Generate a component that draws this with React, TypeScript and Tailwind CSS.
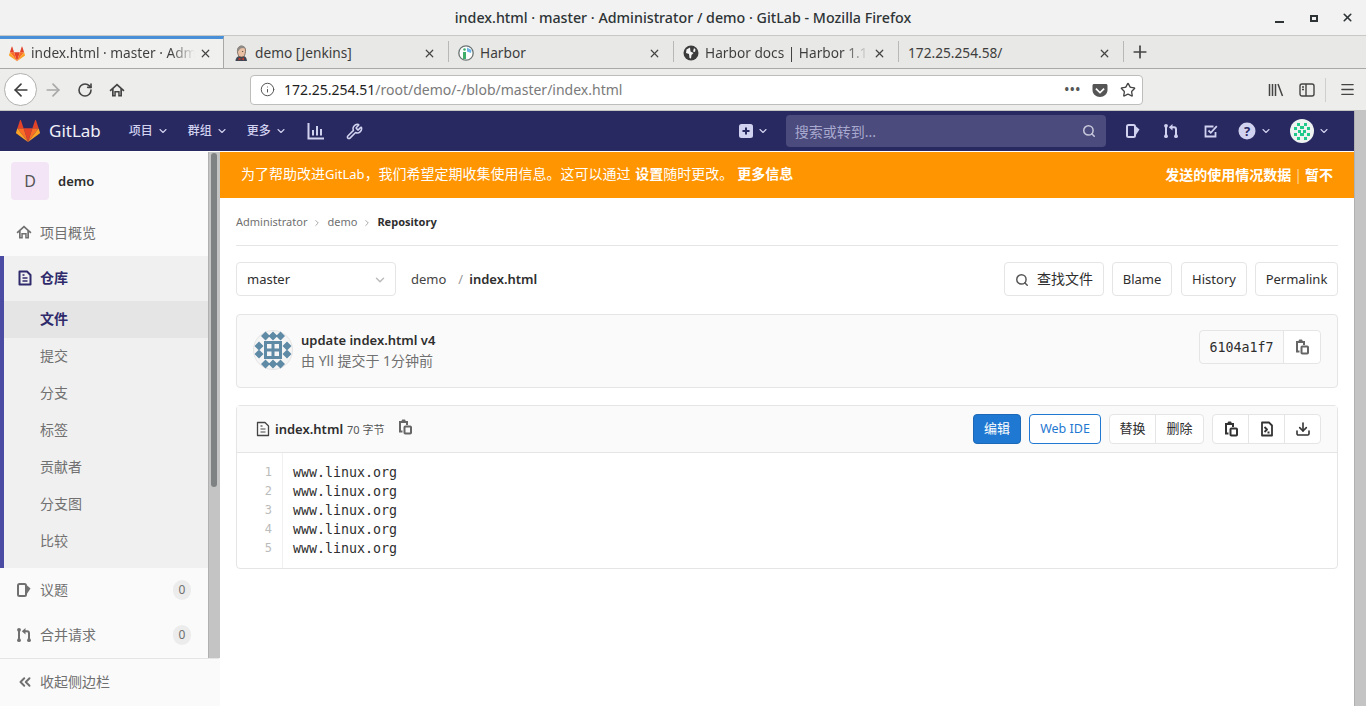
import React from "react";
import {
  ArrowLeft,
  ArrowRight,
  ChevronDown,
  ChevronRight,
  ChevronsLeft,
  Download,
  Info,
  Menu,
  Plus,
  RotateCw,
  Search,
  Star,
  Wrench,
  X,
} from "lucide-react";

const sans = { fontFamily: '"Noto Sans", "Noto Sans CJK SC", sans-serif' };
const mono = { fontFamily: '"DejaVu Sans Mono", monospace' };

const Tanuki = ({ size = 24 }: { size?: number }) => (
  <svg width={size} height={size} viewBox="0 0 36 36">
    <path fill="#e24329" d="m18 34.38 6.63-20.4H11.37z" />
    <path fill="#fc6d26" d="M18 34.38 11.37 13.98H2.08z" />
    <path fill="#fca326" d="M2.08 13.98.07 20.18a1.37 1.37 0 0 0 .5 1.53L18 34.38z" />
    <path fill="#e24329" d="M2.08 13.98h9.29L7.38 1.7a.68.68 0 0 0-1.3 0z" />
    <path fill="#fc6d26" d="m18 34.38 6.63-20.4h9.29z" />
    <path fill="#fca326" d="m33.92 13.98 2.01 6.2a1.37 1.37 0 0 1-.5 1.53L18 34.38z" />
    <path fill="#e24329" d="M33.92 13.98h-9.29L28.62 1.7a.68.68 0 0 1 1.3 0z" />
  </svg>
);

const IssueIcon = ({ className }: { className?: string }) => (
  <svg className={className} viewBox="0 0 16 16" fill="none" stroke="currentColor" strokeWidth="2">
    <rect x="2" y="2" width="8" height="12" rx="1.5" />
    <path d="M10.500 3l4 3.500-4 6z" fill="currentColor" stroke="none" />
  </svg>
);

const MrIcon = ({ className }: { className?: string }) => (
  <svg className={className} viewBox="0 0 16 16" fill="currentColor">
    <circle cx="3" cy="2.800" r="1.900" />
    <circle cx="3" cy="13.200" r="1.900" />
    <rect x="2" y="3" width="2" height="10" />
    <circle cx="13" cy="13.200" r="1.900" />
    <path d="M12 13V6.500c0-.8-.4-1.200-1.200-1.200H9.500V7.600L5.800 4.300 9.500 1v2.300h1.600c1.900 0 2.900 1.100 2.900 3V13z" />
  </svg>
);

const CopyIcon = ({ className }: { className?: string }) => (
  <svg className={className} viewBox="0 0 16 16" fill="none" stroke="currentColor" strokeWidth="2">
    <path d="M5.500 12.500H3V3h7v3" />
    <rect x="4.800" y="0.500" width="3.600" height="3.500" fill="currentColor" stroke="none" rx="0.800" />
    <rect x="7.500" y="7.500" width="6.500" height="7" rx="0.800" />
  </svg>
);

const FileIcon = ({ className, solid }: { className?: string; solid?: boolean }) => (
  <svg className={className} viewBox="0 0 16 16" fill="none" stroke="currentColor" strokeWidth={solid ? 2 : 1.300}>
    <path d="M2.500 1.500h7.500l3.500 3.500v9.500h-11z" strokeLinejoin="round" />
    <path d="M5.500 8h5M5.500 11h5" strokeWidth={solid ? 1.600 : 1.200} />
    <path d="M5.500 5h2" strokeWidth={solid ? 1.600 : 1.200} />
  </svg>
);

const HomeIcon = ({ className }: { className?: string }) => (
  <svg className={className} viewBox="0 0 16 16" fill="currentColor">
    <path d="M8 1.500.5 8.200l1.100 1.200L3 8.200V14.500h3.800V10.500h2.400v4H13V8.200l1.400 1.200 1.100-1.200zM11.300 13h-.6V9H5.300v4h-.6V6.800L8 3.800l3.300 3z" />
  </svg>
);

const Identicon = () => (
  <svg className="w-10 h-10 -mt-[2px]" viewBox="0 0 40 40">
    <circle cx="20" cy="20" r="19.500" fill="#f5f5f5" stroke="#e5e5e5" />
    <g fill="#5f8aa6">
      <path d="M12.500 1.500l4.500 4.500-4.500 4.500L8 6zM20 1.500l4.500 4.500-4.500 4.500L15.500 6zM27.500 1.500l4.500 4.500-4.500 4.500L23 6zM12.500 29.500l4.500 4.500-4.500 4.500L8 34zM20 29.500l4.500 4.500-4.500 4.500-4.500-4.500zM27.500 29.500l4.500 4.500-4.500 4.500-4.500-4.500z" />
      <path d="M6 11.500l4.500 4.500L6 20.500 1.500 16zM6 19.500l4.500 4.500L6 28.500 1.500 24zM34 11.500l4.500 4.500-4.500 4.500-4.500-4.500zM34 19.500l4.500 4.500-4.500 4.500-4.500-4.500z" />
      <path d="M11 11h18v18H11zM14 14v4.500h4.500V14zM21.500 14v4.500H26V14zM14 21.500V26h4.500v-4.500zM21.500 21.500V26H26v-4.500z" fillRule="evenodd" />
    </g>
  </svg>
);

const UserAvatar = () => (
  <svg className="w-6 h-6" viewBox="0 0 24 24">
    <circle cx="12" cy="12" r="12" fill="#eef3f1" />
    <g fill="#1fc98a">
      <path d="M7 4h3v3H7zM14 4h3v3h-3zM4 8h3v3H4zM17 8h3v3h-3zM10 7h4v3h-4zM8 11h3v3H8zM13 11h3v3h-3zM10 14h4v3h-4zM4 14h3v3H4zM17 14h3v3h-3zM7 18h3v3H7zM14 18h3v3h-3z" />
    </g>
  </svg>
);

const JenkinsIcon = () => (
  <svg className="w-4 h-4" viewBox="0 0 16 16">
    <path d="M2.500 16c0-2.500 1.500-4.500 3.500-5h5c1.800.6 2.800 2.500 3 5z" fill="#3d4654" />
    <path d="M4.500 7C4 3.500 6 1 8.500 1S13 3 12.500 6.500 11.500 12 8.500 12 5 10 4.500 7z" fill="#e9c0a4" stroke="#5a4a42" strokeWidth="0.700" />
    <path d="M4.300 7C3.500 2.500 6.500.3 9 .7c2 .3 3.300 1.500 3.500 3C10 2.500 7 3 6 5.500z" fill="#8d8a86" />
    <path d="M5.500 12.500 8.300 14l2.700-1.500v3L8.300 14l-2.800 1.500z" fill="#c0392b" />
    <circle cx="9.700" cy="6.500" r="0.600" fill="#333" />
  </svg>
);

const HarborIcon = () => (
  <svg className="w-4 h-4" viewBox="0 0 16 16">
    <circle cx="8" cy="8" r="7.200" fill="#fff" stroke="#6a7472" strokeWidth="1.300" />
    <rect x="5" y="7" width="3" height="7" fill="#3fae6a" />
    <circle cx="6.500" cy="4.500" r="1.300" fill="#3fae6a" />
    <path d="M9 2.500l4.500 2.500-.5 3-4-1.500z" fill="#6db3e8" />
  </svg>
);

const GlobeIcon = () => (
  <svg className="w-4 h-4" viewBox="0 0 16 16">
    <circle cx="8" cy="8" r="7.500" fill="#3b3b3b" />
    <path d="M7 2.500 3.500 4.500 3 8l3 1 .5 4 1.500.5.500-3.500 2-2-3-1.500zM11 3l1.500 1.500L12 7l-2-.5z" fill="#f4f4f4" />
  </svg>
);

const Tab = ({ icon, title, active, fade }: { icon?: React.ReactNode; title: string; active?: boolean; fade?: boolean }) => (
  <div
    className={
      "relative h-full flex items-center pl-[9px] " +
      (active
        ? "w-[224px] pr-[11px] bg-[#f0f0ef] border-t-[3px] border-t-[#4a90d9] border-r border-r-[#a8a8a6]"
        : "w-[225px] pr-[13px] pt-[2px]")
    }
  >
    {icon && <span className="mr-[6px] shrink-0 flex">{icon}</span>}
    <span className="flex-1 min-w-0 whitespace-nowrap text-[13.700px] text-[#3d3d3d]">
      {fade ? (
        <span className="block bg-gradient-to-r from-[#3d3d3d] from-85% to-transparent bg-clip-text text-transparent">{title}</span>
      ) : (
        title
      )}
    </span>
    <X className="w-[13px] h-[13px] shrink-0 text-[#444] ml-1" strokeWidth={2.200} />
    {!active && <span className="absolute right-0 top-[5px] bottom-[6px] w-px bg-[#b8b8b6]" />}
  </div>
);

const TopBtn = ({ children, className = "" }: { children: React.ReactNode; className?: string }) => (
  <div className={"h-[34px] pt-[1px] flex items-center justify-center border border-[#e5e5e5] rounded bg-white text-[13px] text-[#2e2e2e] " + className}>
    {children}
  </div>
);

const SubItem = ({ label, active }: { label: string; active?: boolean }) => (
  <div
    className={
      "h-[37px] pb-[2px] flex items-center pl-9 text-[14px] " +
      (active ? "bg-[#e5e5e5] font-bold text-[#2f2a6b]" : "text-[#707070]")
    }
  >
    {label}
  </div>
);

const Badge = ({ n }: { n: number }) => (
  <span className="ml-auto mr-[17px] w-[18px] h-5 rounded-full bg-[#ececec] text-[#707070] text-[12px] flex items-center justify-center">
    {n}
  </span>
);

const lines = [1, 2, 3, 4, 5];

export default function App() {
  return (
    <div className="w-[1366px] h-[706px] overflow-hidden flex flex-col bg-white" style={sans}>
      {/* window title */}
      <div className="h-9 shrink-0 bg-[#f2f2f2] border-b border-[#c8c8c6] flex items-center relative">
        <div className="w-full text-center text-[14.250px] font-medium text-[#2e3436]">
          index.html · master · Administrator / demo · GitLab - Mozilla Firefox
        </div>
        <div className="absolute right-0 top-0 h-full flex items-center text-[#2e3436]">
          <span className="w-[9px] h-[2px] bg-[#2e3436] mr-[26px] mt-[8px]" />
          <span className="w-[8px] h-[7px] border-2 border-[#2e3436] mr-[23px] mt-[1px]" />
          <X className="w-[13px] h-[13px] mr-[12px] -mt-[1px]" strokeWidth={3} />
        </div>
      </div>

      {/* tabs */}
      <div className="h-[33px] shrink-0 bg-[#e8e8e6] border-b border-[#a8a8a6] flex items-center">
        <Tab active icon={<Tanuki size={16} />} title="index.html · master · Adm" fade />
        <Tab icon={<JenkinsIcon />} title="demo [Jenkins]" />
        <Tab icon={<HarborIcon />} title="Harbor" />
        <Tab icon={<GlobeIcon />} title="Harbor docs | Harbor 1.10" fade />
        <Tab title="172.25.254.58/" />
        <Plus className="w-5 h-5 ml-[6px] text-[#444]" strokeWidth={2} />
      </div>

      {/* firefox toolbar */}
      <div className="h-[42px] shrink-0 bg-[#ededeb] border-b border-[#c4c4c2] flex items-center">
        <div className="w-[33px] h-[33px] ml-1 rounded-full bg-white border border-[#b0b0ae] flex items-center justify-center">
          <ArrowLeft className="w-5 h-5 text-[#3d3d3d]" strokeWidth={2} />
        </div>
        <ArrowRight className="w-5 h-5 ml-[6px] text-[#a8a8a8]" strokeWidth={2} />
        <RotateCw className="w-4 h-4 ml-[14px] text-[#444]" strokeWidth={2.400} />
        <HomeIcon className="w-4 h-4 ml-[16px] text-[#444]" />
        <div className="w-[893px] h-[30px] ml-[125px] flex items-center bg-white border border-[#bdbdbb] rounded-[4px] text-[14px] pl-[9px] pr-[6px]">
          <Info className="w-[15px] h-[15px] text-[#555]" strokeWidth={1.600} />
          <span className="ml-[9px] text-[#1f1f1f]">172.25.254.51</span>
          <span className="text-[#7a7a7a]">/root/demo/-/blob/master/index.html</span>
          <span className="ml-auto text-[#555] font-bold tracking-[1px] text-[12px]">•••</span>
          <svg className="w-4 h-4 ml-[11px] text-[#555]" viewBox="0 0 16 16" fill="currentColor">
            <path d="M2 2h12c.8 0 1.500.7 1.500 1.500V8c0 4-3.500 7-7.500 7S.5 12 .5 8V3.500C.5 2.700 1.200 2 2 2zm2.500 4L3.300 7.200 8 11.800l4.700-4.600L11.500 6 8 9.400z" />
          </svg>
          <Star className="w-4 h-4 ml-[12px] text-[#444]" strokeWidth={2} />
        </div>
        <div className="ml-auto flex items-center text-[#444]">
          <svg className="w-4 h-4" viewBox="0 0 16 16" stroke="currentColor" strokeWidth="1.500" fill="none">
            <path d="M1.500 2v12M4.500 2v12M7.500 2v12M10 2l4.500 12" />
          </svg>
          <svg className="w-4 h-4 ml-[15px]" viewBox="0 0 16 16" stroke="currentColor" strokeWidth="1.400" fill="none">
            <rect x="1" y="2" width="14" height="12" rx="2" />
            <path d="M7 2v12M3 5h2M3 7.500h2" />
          </svg>
          <span className="w-px h-6 bg-[#cfcfcd] ml-[10px]" />
          <Menu className="w-[17px] h-[17px] ml-[13px] mr-[10px]" strokeWidth={1.800} />
        </div>
      </div>

      {/* page + page scrollbar */}
      <div className="flex-1 min-h-0 flex">
        <div className="flex-1 min-w-0 flex flex-col">
          {/* gitlab navbar */}
          <div className="h-[41px] shrink-0 bg-[#292961] border-b border-white flex items-center text-[#d1d1f0]">
            <div className="ml-4"><Tanuki size={24} /></div>
            <span className="ml-[9px] text-[17px] text-[#f0f0f8]">GitLab</span>
            <span className="ml-[28px] text-[12px] font-medium">项目</span>
            <ChevronDown className="w-3 h-3 ml-[4px]" strokeWidth={2.200} />
            <span className="ml-[19px] text-[12px] font-medium">群组</span>
            <ChevronDown className="w-3 h-3 ml-[4px]" strokeWidth={2.200} />
            <span className="ml-[19px] text-[12px] font-medium">更多</span>
            <ChevronDown className="w-3 h-3 ml-[4px]" strokeWidth={2.200} />
            <svg className="w-[18px] h-[18px] ml-[20px]" viewBox="0 0 18 18" fill="none" stroke="currentColor" strokeWidth="2">
              <path d="M1.500 1v15.500H17M6 8v5.500M10 4v9.500M14 7v6.500" />
            </svg>
            <Wrench className="w-[17px] h-[17px] ml-[21px]" strokeWidth={2.200} />
            <svg className="w-[14px] h-[14px] ml-[376px]" viewBox="0 0 14 14">
              <rect width="14" height="14" rx="2.500" fill="currentColor" />
              <path d="M7 3.500v7M3.500 7h7" stroke="#292961" strokeWidth="2" />
            </svg>
            <ChevronDown className="w-3 h-3 ml-[4px]" strokeWidth={2.200} />
            <div className="w-[320px] h-8 ml-[17px] rounded bg-[#4b4b7d] flex items-center px-[9px] text-[14px] text-[#a9a9cf]">
              搜索或转到...
              <Search className="w-[14px] h-[14px] ml-auto mr-[1px] text-[#c8c8dc]" strokeWidth={2.600} />
            </div>
            <IssueIcon className="w-4 h-4 ml-[19px]" />
            <MrIcon className="w-4 h-4 ml-[22px]" />
            <svg className="w-[14px] h-[14px] ml-[25px]" viewBox="0 0 14 14" fill="none" stroke="currentColor" strokeWidth="1.800">
              <path d="M11.500 8v4.500h-10v-10h8M4.500 6.500l2.300 2.300L12.800 2.200" />
            </svg>
            <svg className="w-[18px] h-[18px] ml-[20px]" viewBox="0 0 18 18">
              <circle cx="9" cy="9" r="8.500" fill="currentColor" />
              <text x="9" y="13.500" textAnchor="middle" fontSize="13" fontWeight="700" fill="#292961">?</text>
            </svg>
            <ChevronDown className="w-3 h-3 ml-[4px]" strokeWidth={2.200} />
            <div className="ml-[18px] flex"><UserAvatar /></div>
            <ChevronDown className="w-3 h-3 ml-[4px]" strokeWidth={2.200} />
          </div>

          <div className="flex-1 min-h-0 flex">
            {/* sidebar */}
            <aside className="w-[220px] shrink-0 flex flex-col bg-[#fafafa]">
              <div className="flex-1 min-h-0 flex">
                <div className="w-[208px] flex flex-col">
                  <div className="h-[58px] flex items-center pl-[11px]">
                    <div className="w-[38px] h-[38px] rounded-[4px] bg-[#f3e5f5] text-[#555] text-[16px] flex items-center justify-center">D</div>
                    <span className="ml-[9px] pt-[2px] text-[13px] font-semibold text-[#2e2e2e]">demo</span>
                  </div>
                  <div className="h-[46px] pb-[2px] flex items-center pl-4 text-[14px] text-[#707070]">
                    <HomeIcon className="w-4 h-4 mr-[8px]" />
                    项目概览
                  </div>
                  <div className="h-[312px] bg-[#f0f0f0] border-l-4 border-[#4b4ba3] flex flex-col">
                    <div className="h-[45px] pb-[2px] flex items-center pl-[13px] text-[14px] font-bold text-[#2f2a6b]">
                      <FileIcon className="w-4 h-4 mr-[7px]" solid />
                      仓库
                    </div>
                    <SubItem label="文件" active />
                    <SubItem label="提交" />
                    <SubItem label="分支" />
                    <SubItem label="标签" />
                    <SubItem label="贡献者" />
                    <SubItem label="分支图" />
                    <SubItem label="比较" />
                  </div>
                  <div className="h-[45px] pb-[2px] flex items-center pl-4 text-[14px] text-[#707070]">
                    <IssueIcon className="w-4 h-4 mr-[8px]" />
                    议题
                    <Badge n={0} />
                  </div>
                  <div className="h-[45px] pb-[2px] flex items-center pl-4 text-[14px] text-[#707070]">
                    <MrIcon className="w-4 h-4 mr-[8px]" />
                    合并请求
                    <Badge n={0} />
                  </div>
                </div>
                <div className="w-3 bg-[#c4c4c4] border-l border-[#b0b0b0]">
                  <div className="w-[6px] h-[334px] ml-[2px] mt-[1px] rounded-full bg-[#7e8282]" />
                </div>
              </div>
              <div className="h-[48px] shrink-0 w-[219px] border-t border-[#e5e5e5] bg-[#fafafa] flex items-center pl-4 pb-[2px] text-[14px] text-[#707070]">
                <ChevronsLeft className="w-[18px] h-[18px] mr-[6px]" strokeWidth={2.600} />
                收起侧边栏
              </div>
            </aside>

            {/* content */}
            <main className="flex-1 min-w-0 flex flex-col">
              <div className="h-[46px] shrink-0 bg-[#ff9500] flex items-center px-[21px] pb-[2px] text-[14px] text-white">
                <span>
                  为了帮助改进<span className="text-[13px]">GitLab</span>，我们希望定期收集使用信息。这可以通过 <b className="ml-[1px]">设置</b>随时更改。<b className="ml-[4px]">更多信息</b>
                </span>
                <span className="ml-auto font-bold">发送的使用情况数据</span>
                <span className="mx-[3px] text-[#ffd79a]">|</span>
                <span className="font-bold">暂不</span>
              </div>

              <div className="px-4">
                <div className="h-[48px] pt-[2px] flex items-center border-b border-[#e5e5e5] text-[11px] text-[#707070]">
                  Administrator
                  <ChevronRight className="w-[10px] h-[10px] mx-[5px] text-[#999]" strokeWidth={2} />
                  demo
                  <ChevronRight className="w-[10px] h-[10px] mx-[5px] text-[#999]" strokeWidth={2} />
                  <span className="font-bold text-[#2e2e2e]">Repository</span>
                </div>

                <div className="mt-4 flex items-center">
                  <div className="w-[160px] h-[34px] pt-[1px] border border-[#e5e5e5] rounded flex items-center pl-[10px] pr-[8px] text-[13px] text-[#2e2e2e]">
                    master
                    <ChevronDown className="w-[14px] h-[14px] ml-auto text-[#bbb]" strokeWidth={2.500} />
                  </div>
                  <span className="ml-[15px] pt-[2px] text-[13px] text-[#444]">demo</span>
                  <span className="ml-[12px] pt-[2px] text-[13px] text-[#999]">/</span>
                  <span className="ml-[6px] pt-[2px] text-[13px] font-semibold text-[#2e2e2e]">index.html</span>
                  <div className="ml-auto flex items-center">
                    <TopBtn className="w-[100px]">
                      <Search className="w-[14px] h-[14px] mr-2 text-[#555]" strokeWidth={2.500} />
                      <span className="text-[14px] -mt-[3px]">查找文件</span>
                    </TopBtn>
                    <TopBtn className="w-[60px] ml-2">Blame</TopBtn>
                    <TopBtn className="w-[66px] ml-[9px]">History</TopBtn>
                    <TopBtn className="w-[83px] ml-2">Permalink</TopBtn>
                  </div>
                </div>

                <div className="mt-[18px] h-[74px] border border-[#e5e5e5] rounded bg-[#fafafa] flex items-center pl-4 pr-4">
                  <Identicon />
                  <div className="ml-2 -mt-[2px]">
                    <div className="text-[13px] leading-[20px] font-semibold text-[#2e2e2e]">update index.html v4</div>
                    <div className="text-[14px] leading-[20px] mt-[1px] text-[#707070]">由 Yll 提交于 1分钟前</div>
                  </div>
                  <div className="ml-auto -mt-2 h-[34px] flex border border-[#e5e5e5] rounded">
                    <div className="w-[84px] pt-[1px] flex items-center justify-center border-r border-[#e5e5e5] text-[13.300px] text-[#2e2e2e]" style={mono}>
                      6104a1f7
                    </div>
                    <div className="w-9 bg-white flex items-center justify-center rounded-r">
                      <CopyIcon className="w-4 h-4 text-[#666]" />
                    </div>
                  </div>
                </div>

                <div className="mt-[17px] border border-[#e5e5e5] rounded">
                  <div className="h-[47px] bg-[#fafafa] border-b border-[#e5e5e5] flex items-center pl-[18px] pr-4 text-[#2e2e2e]">
                    <FileIcon className="w-4 h-4 text-[#444] mr-[4px]" />
                    <span className="pt-[2px] text-[13px] font-semibold">index.html</span>
                    <span className="pt-[2px] text-[11px] ml-[4px] text-[#555]">70 字节</span>
                    <CopyIcon className="w-4 h-4 text-[#666] ml-[12px] -mt-1" />
                    <div className="ml-auto flex items-center text-[13px]">
                      <div className="w-12 h-[30px] rounded bg-[#1f78d1] border border-[#1b69b6] text-white flex items-center justify-center">编辑</div>
                      <div className="w-[72px] h-[30px] ml-2 rounded border border-[#1f78d1] bg-white text-[12.500px] text-[#1f78d1] flex items-center justify-center">Web IDE</div>
                      <div className="ml-2 h-[30px] flex border border-[#e5e5e5] rounded bg-white text-[#2e2e2e]">
                        <div className="w-[46px] flex items-center justify-center border-r border-[#e5e5e5]">替换</div>
                        <div className="w-[47px] flex items-center justify-center">删除</div>
                      </div>
                      <div className="ml-2 h-[30px] flex border border-[#e5e5e5] rounded bg-white text-[#333]">
                        <div className="w-9 flex items-center justify-center border-r border-[#e5e5e5]"><CopyIcon className="w-4 h-4" /></div>
                        <div className="w-9 flex items-center justify-center border-r border-[#e5e5e5]">
                          <svg className="w-4 h-4" viewBox="0 0 16 16" fill="none" stroke="currentColor" strokeWidth="1.800">
                            <path d="M3 1.500h7l3 3v10H3zM5.500 6l2.500 2.500L5.500 11M8.500 11.500h2" strokeLinejoin="round" />
                          </svg>
                        </div>
                        <div className="w-[35px] flex items-center justify-center"><Download className="w-4 h-4" strokeWidth={2.400} /></div>
                      </div>
                    </div>
                  </div>
                  <div className="flex text-[13.300px] leading-[19px]" style={mono}>
                    <div className="w-[46px] py-[10px] pr-[10px] border-r border-[#f0f0f0] text-right text-[#bbb] text-[12px]">
                      {lines.map((n) => (
                        <div key={n}>{n}</div>
                      ))}
                    </div>
                    <div className="py-[10px] pl-[10px] text-[#2e2e2e]">
                      {lines.map((n) => (
                        <div key={n}>www.linux.org</div>
                      ))}
                    </div>
                  </div>
                </div>
              </div>
            </main>
          </div>
        </div>
        <div className="w-3 shrink-0 bg-[#c4c4c4] border-l border-[#b0b0b0]" />
      </div>
    </div>
  );
}
